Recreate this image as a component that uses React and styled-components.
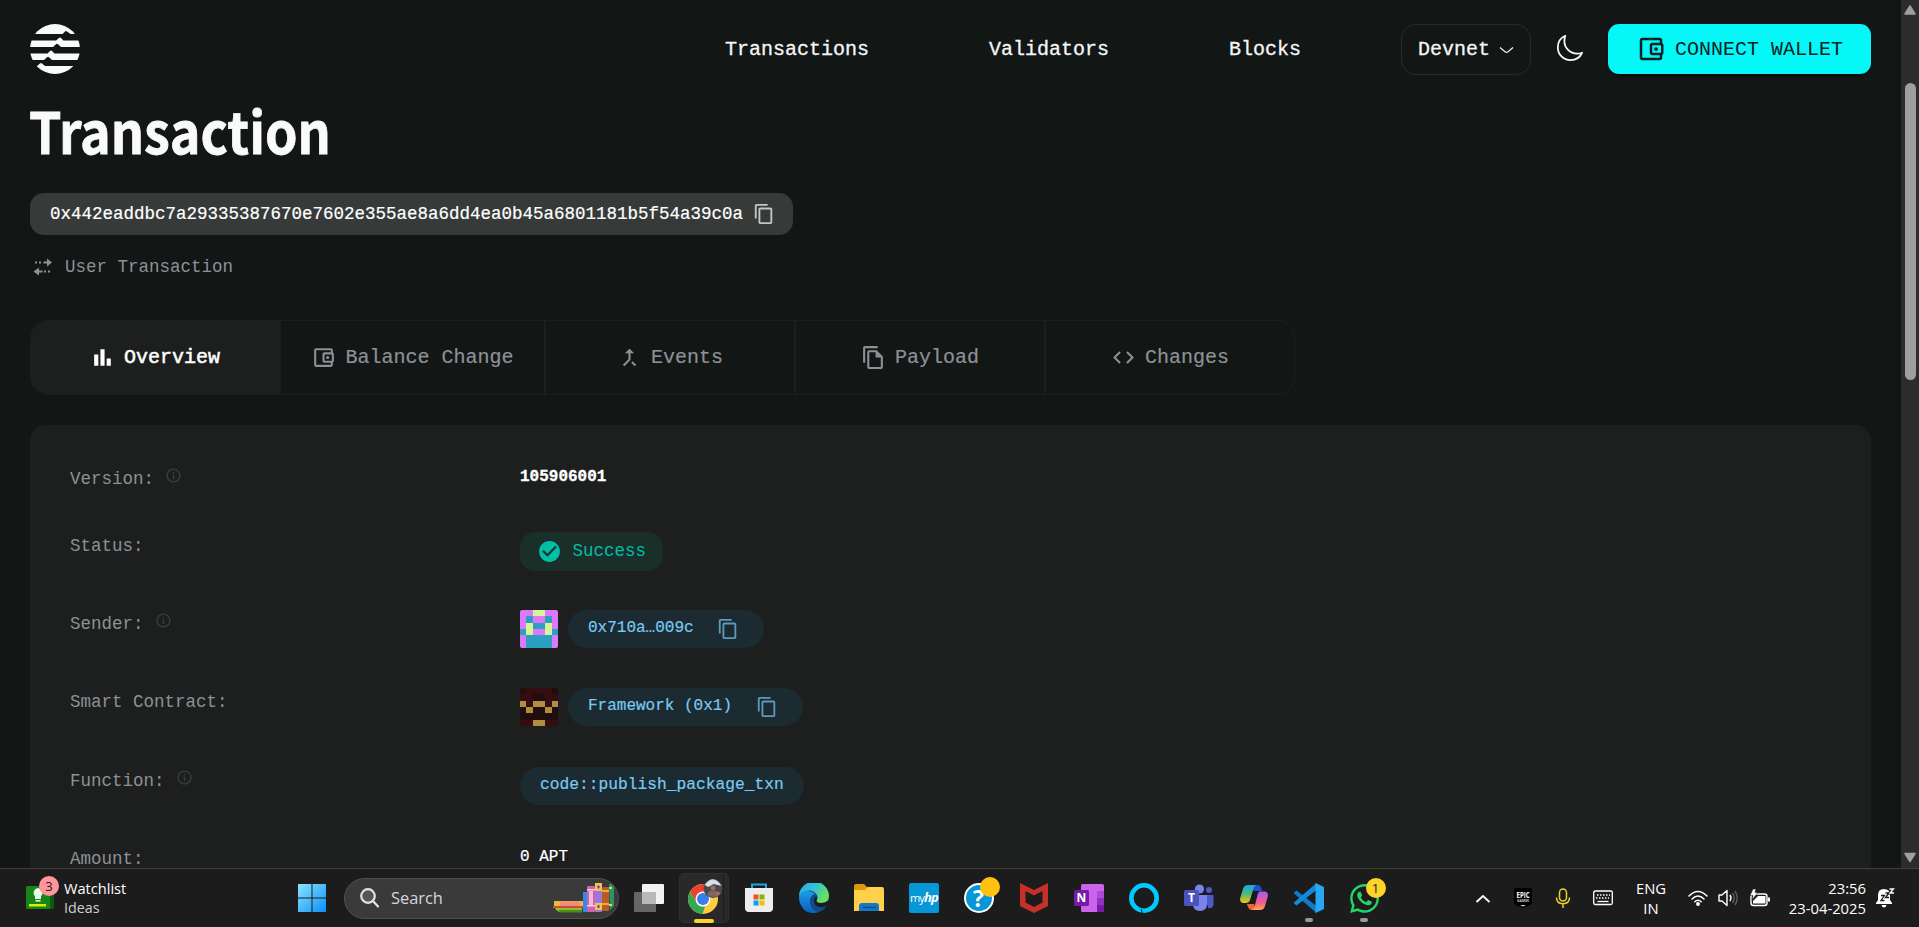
import React from "react";
import styled, { createGlobalStyle } from "styled-components";
import { MdContentCopy, MdCallMerge, MdOutlineFileCopy, MdCode, MdCheckCircle, MdInfoOutline } from "react-icons/md";
import { FaWhatsapp } from "react-icons/fa";

const mono = '"Liberation Mono", monospace';
const ui = '"Open Sans", sans-serif';

const Global = createGlobalStyle`
  * { box-sizing: border-box; }
  html, body { margin: 0; height: 927px; overflow: hidden; background: #121615; }
  svg { display: block; flex: none; }
`;

const Screen = styled.div`
  width: 1919px;
  height: 927px;
  display: flex;
  flex-direction: column;
  overflow: hidden;
  font-family: ${mono};
`;

const Browser = styled.div`
  height: 868px;
  display: flex;
  overflow: hidden;
`;

const Page = styled.main`
  width: 1901px;
  height: 868px;
  padding: 24px 30px 0;
  display: flex;
  flex-direction: column;
  overflow: hidden;
  background: #121615;
`;

const Header = styled.header`
  height: 51px;
  display: flex;
  flex: none;
  align-items: flex-start;
`;

const Nav = styled.nav`
  display: flex;
  gap: 120px;
  margin-left: 645px;
  width: 676px;
`;

const NavLink = styled.a`
  font-size: 20px;
  line-height: 52px;
  color: #f5f5f5;
  -webkit-text-stroke: 0.3px #f5f5f5;
`;

const NetworkSelect = styled.button`
  width: 130px;
  height: 51px;
  padding: 0 16px;
  display: flex;
  align-items: center;
  justify-content: space-between;
  background: none;
  border: 1px solid #272b2a;
  border-radius: 15px;
  font: 20px ${mono};
  color: #f5f5f5;
  -webkit-text-stroke: 0.3px #f5f5f5;
`;

const ThemeToggle = styled.button`
  width: 77px;
  height: 48px;
  padding: 0;
  display: flex;
  align-items: center;
  justify-content: center;
  border: 0;
  background: none;
`;

const WalletButton = styled.button`
  width: 263px;
  height: 50px;
  padding: 0 0 0 28px;
  display: flex;
  align-items: center;
  gap: 9px;
  border: 0;
  border-radius: 11px;
  background: #06f7f7;
  box-shadow: 0 2px 3px rgba(0, 0, 0, 0.5);
  font: 20px ${mono};
  color: #0d2222;
`;

const Title = styled.h1`
  margin: 13px 0 0 -1px;
  height: 82px;
  font-family: "Noto Sans CJK SC", sans-serif;
  font-weight: 700;
  font-size: 57px;
  line-height: 82px;
  color: #fafafa;
  -webkit-text-stroke: 0.8px #fafafa;
  transform: scaleX(0.912);
  transform-origin: left;
`;

const HashChip = styled.div`
  margin-top: 23px;
  width: 763px;
  height: 42px;
  padding-left: 20px;
  display: flex;
  flex: none;
  align-items: center;
  gap: 10px;
  border-radius: 14px;
  background: #363a39;
  color: #fff;
  font-size: 17.5px;
  -webkit-text-stroke: 0.2px #fff;
`;

const TypeLine = styled.div`
  margin-top: 20px;
  height: 24px;
  display: flex;
  flex: none;
  align-items: center;
  gap: 12px;
  padding-left: 3px;
  font-size: 17.5px;
  color: #8f9097;
`;

const Tabs = styled.div`
  margin-top: 41px;
  width: 1265px;
  height: 75px;
  display: flex;
  flex: none;
  overflow: hidden;
  border: 1px solid #1c1f1e;
  border-radius: 18px;
`;

const Tab = styled.button`
  width: ${(p) => p.$width}px;
  padding: 0;
  display: flex;
  align-items: center;
  justify-content: center;
  gap: 9px;
  border: 0;
  border-right: ${(p) => (p.$last ? 0 : 2)}px solid #1c1f1e;
  background: ${(p) => (p.$active ? "#1c1f1e" : "transparent")};
  color: ${(p) => (p.$active ? "#fff" : "#8f9097")};
  font: 20px ${mono};
  -webkit-text-stroke: ${(p) => (p.$active ? 0.5 : 0.2)}px currentColor;

  svg { -webkit-text-stroke: 0; }
`;

const Card = styled.section`
  margin-top: 30px;
  height: 520px;
  flex: none;
  padding: 40px;
  display: flex;
  flex-direction: column;
  gap: 40px;
  border-radius: 15px;
  background: #1c1f1e;
`;

const Row = styled.div`
  height: ${(p) => p.$height || 38.4}px;
  flex: none;
  display: flex;
  align-items: flex-start;
`;

const Label = styled.div`
  width: 450px;
  height: 27px;
  display: flex;
  align-items: flex-start;
  gap: 11px;
  font-size: 17.5px;
  line-height: 28px;
  color: #8f9097;

  svg { margin-top: 2px; color: #3a3e3d; }
`;

const Value = styled.div`
  display: flex;
  align-items: center;
  gap: 10px;
`;

const PlainValue = styled.span`
  font-size: 16px;
  line-height: 25px;
  font-weight: ${(p) => (p.$bold ? 700 : 400)};
  color: #fff;
  -webkit-text-stroke: ${(p) => (p.$bold ? 0.3 : 0.2)}px #fff;
`;

const StatusChip = styled.div`
  width: 143px;
  height: 39px;
  padding-left: 17px;
  display: flex;
  align-items: center;
  gap: 10.5px;
  border-radius: 15px;
  background: #1a2e2a;
  color: #00bfa5;
  font-size: 17.5px;
  line-height: 36px;
`;

const LinkChip = styled.div`
  width: ${(p) => p.$width}px;
  height: 38px;
  padding: 0 25px 0 20px;
  display: flex;
  align-items: center;
  justify-content: space-between;
  border-radius: 20px;
  background: #1c2b31;
  color: #79c9f2;
  font-size: ${(p) => p.$size || 16}px;

  svg { color: #5c9ab9; }
`;

const ChipText = styled.span`
  height: 24px;
  line-height: 22px;
  white-space: nowrap;
  -webkit-text-stroke: 0.2px #79c9f2;
`;

const Scrollbar = styled.div`
  width: 18px;
  display: flex;
  flex-direction: column;
  align-items: center;
  background: #2c2c2c;
`;

const Thumb = styled.div`
  width: 11px;
  height: 297px;
  margin-top: 68px;
  margin-bottom: auto;
  border-radius: 6px;
  background: #9f9f9f;
`;

const Taskbar = styled.footer`
  height: 59px;
  display: flex;
  align-items: center;
  border-top: 1px solid #414141;
  background: #1c1c1c;
  font-family: ${ui};
  color: #fff;
`;

const Widgets = styled.div`
  width: 297px;
  padding-left: 26px;
  display: flex;
  align-items: center;
  gap: 10px;
`;

const BadgeAnchor = styled.div`
  position: relative;
  display: flex;
`;

const Badge = styled.span`
  position: absolute;
  left: ${(p) => p.$x}px;
  top: ${(p) => p.$y}px;
  width: 20px;
  height: 20px;
  border-radius: 50%;
  background: ${(p) => p.$color};
  color: #1c1c1c;
  font-size: 13px;
  line-height: 20px;
  text-align: center;
`;

const WidgetText = styled.div`
  display: flex;
  flex-direction: column;
  font-size: 14.6px;
  line-height: 20px;

  span { color: #cfcfcf; font-size: 14.3px; }
`;

const SearchBox = styled.div`
  width: 275px;
  height: 41px;
  margin-left: 17px;
  padding: 0 3px 0 15px;
  display: flex;
  align-items: center;
  border: 1px solid #505050;
  border-radius: 21px;
  background: #3a3a3a;
  color: #d6d6d6;
  font-size: 16.4px;
  overflow: hidden;

  span { margin: 0 auto 2px 12px; }
`;

const Apps = styled.div`
  display: flex;
  margin-left: 2.5px;
`;

const AppButton = styled.div`
  width: 55px;
  height: 50px;
  display: flex;
  flex-direction: column;
  align-items: center;
  justify-content: center;
  position: relative;
`;

const ActiveTile = styled.div`
  width: 50px;
  height: 50px;
  display: flex;
  align-items: center;
  justify-content: center;
  border: 1px solid #303030;
  border-radius: 5px;
  background: linear-gradient(90deg, #292929 43px, #1c1c1c 43px, #1c1c1c 44px, #292929 44px);
`;

const Indicator = styled.i`
  position: absolute;
  bottom: ${(p) => (p.$wide ? 0 : 1)}px;
  width: ${(p) => (p.$wide ? 20 : 8)}px;
  height: 4px;
  border-radius: 2px;
  background: ${(p) => (p.$wide ? "#ffd42a" : "#9a9a9a")};
`;

const Tray = styled.div`
  display: flex;
  align-items: center;
  margin-left: auto;
  padding-right: 14px;
`;

const TrayIcon = styled.div`
  width: ${(p) => p.$width || 40}px;
  display: flex;
  justify-content: center;
`;

const TrayText = styled.div`
  width: ${(p) => p.$width}px;
  font-size: 14.8px;
  line-height: 20px;
  text-align: ${(p) => p.$align};
  white-space: pre-line;
`;

const AptosLogo = () => (
  <svg width="50" height="50" viewBox="0 0 50 50">
    <defs><clipPath id="disc"><circle cx="25" cy="25" r="25" /></clipPath></defs>
    <g clipPath="url(#disc)" fill="#fafafa">
      <path d="M0 0H50V10H40.5L37 7.5Q36 6.5 35 7.5L32.5 10H0Z" />
      <path d="M0 16.5H26L29 14Q30 13 31 14L33.5 16.5H50V23H31L28 20.2Q27 19.3 26 20.2L23 23H0Z" />
      <path d="M0 29.4H17.5L20 27Q21 26 22 27L24.5 29.4H50V36H22L19 33.2Q18 32.3 17 33.2L14 36H0Z" />
      <path d="M0 42H7L10 39.4Q11 38.5 12 39.4L15 42H50V50H0Z" />
    </g>
  </svg>
);

const WalletIcon = ({ size }) => (
  <svg width={size} height={size} viewBox="0 0 24 24" fill="currentColor">
    <path d="M21 7.28V5c0-1.100-.9-2-2-2H5c-1.110 0-2 .9-2 2v14c0 1.100.89 2 2 2h14c1.100 0 2-.9 2-2v-2.280c.59-.35 1-.98 1-1.720V9c0-.74-.41-1.370-1-1.720zM20 9v6h-7V9h7zM5 19V5h14v2h-6c-1.100 0-2 .9-2 2v6c0 1.100.9 2 2 2h6v2H5z" />
    <circle cx="16" cy="12" r="1.5" />
  </svg>
);

const BarsIcon = () => (
  <svg width="25" height="25" viewBox="0 0 24 24" fill="currentColor">
    <path d="M4 9h4v11H4zM16 13h4v7h-4zM10 4h4v16h-4z" />
  </svg>
);

const TransferIcon = () => (
  <svg width="20" height="18" viewBox="0 0 20 18" fill="#8f9097">
    <path d="M14 0.500 19 4.500 14 8.500V5.500H10.500V3.500H14ZM6 9.500V12.500H9.500V14.500H6V17.500L0.500 13.500Z" />
    <path d="M2 3.500h2v2h-2zM6 3.500h2v2h-2zM11 12.500h2v2h-2zM15 12.500h2v2h-2z" />
  </svg>
);

const MoonIcon = () => (
  <svg width="30" height="30" viewBox="0 0 512 512" fill="none" stroke="#fafafa" strokeWidth="30" strokeLinejoin="round">
    <path d="M160 136c0-30.620 4.510-61.610 16-88C99.570 81.270 48 159.320 48 248c0 119.290 96.710 216 216 216 88.680 0 166.730-51.570 200-128-26.390 11.490-57.380 16-88 16-119.290 0-216-96.710-216-216z" />
  </svg>
);

const PALETTE = { P: "#dd77fc", B: "#2b9fbf", Y: "#d6f596", D: "#200d0d", R: "#350c0f", G: "#b18d42" };

const Identicon = ({ rows }) => (
  <svg width="38" height="38" viewBox="0 0 6 6" shapeRendering="crispEdges">
    {rows.map((row, y) => row.split("").map((c, x) => (
      <rect key={`${x}-${y}`} x={x} y={y} width="1" height="1" fill={PALETTE[c]} />
    )))}
  </svg>
);

const AvatarFrame = styled.div`
  width: 38px;
  height: 38px;
  border-radius: 2px;
  overflow: hidden;
`;

const WidgetIcon = () => (
  <svg width="28" height="24" viewBox="0 0 28 24">
    <rect x="4" width="24" height="23" rx="1.500" fill="#0b5a10" />
    <rect width="24" height="23" rx="1.500" fill="#178517" />
    <path d="M12 3a5 5 0 0 1 3 8.500V14H9v-2.500A5 5 0 0 1 12 3ZM9.500 15h5v1.500h-5Z" fill="#e8ffe8" transform="translate(0 -1)" />
    <rect x="3" y="18" width="17" height="2.500" fill="#d8f000" />
  </svg>
);

const StartIcon = () => (
  <svg width="30" height="30" viewBox="0 0 30 30">
    <defs>
      <linearGradient id="win" x1="0" y1="0" x2="1" y2="1"><stop stopColor="#8be4ff" /><stop offset="1" stopColor="#0a8ff5" /></linearGradient>
    </defs>
    <path d="M1 1h13.500v13.500H1zM15.500 1H29v13.500H15.500zM1 15.500h13.500V29H1zM15.500 15.500H29V29H15.500z" fill="url(#win)" />
  </svg>
);

const SearchIcon = () => (
  <svg width="19" height="20" viewBox="0 0 19 20" fill="none" stroke="#e3e3e3" strokeWidth="2.200" strokeLinecap="round">
    <circle cx="8" cy="8" r="6.800" fill="#565656" /><path d="m13 13 5 5.500" />
  </svg>
);

const BooksIcon = () => (
  <svg width="62" height="31" viewBox="0 0 62 31">
    <path d="M1 18h30v5H1z" fill="#f0b840" /><rect x="7" y="18.500" width="20" height="5" rx="2" fill="#f38a7c" />
    <path d="M0 23h30v2H0z" fill="#c9502f" />
    <path d="M2 25h27v4H7q-4-1-5-4z" fill="#8bc02c" /><path d="M5 27h24v2.500H8z" fill="#4c8d19" />
    <rect x="30" y="9" width="4" height="20" fill="#3489ec" />
    <rect x="34" y="3" width="8" height="26" rx="1" fill="#d35fae" />
    <path d="M36 8h4v14h-4z" fill="#f0b9d8" /><path d="M34 6h8v1.500h-8zM34 22h8v1.500h-8z" fill="#f5d0e0" />
    <rect x="42" y="0" width="7" height="29" rx="1" fill="#9b78dc" /><path d="M42 0h7v8h-7zM42 20h7v7h-7z" fill="#edc54e" />
    <path d="m45.500 2 1.500 2-1.500 2-1.500-2zM45.500 21.500l1.500 2-1.500 2-1.500-2z" fill="#6541b2" />
    <rect x="49" y="4" width="7" height="24" rx="1" fill="#b85c25" /><path d="M49 7h7v2h-7zM49 20h7v2h-7z" fill="#efaa39" />
    <path d="M56 1h5v22l-4 4z" fill="#2f9362" /><path d="M56 4h3v2h-3zM56 21h3v2h-3z" fill="#c5df79" />
  </svg>
);

const TaskViewIcon = () => (
  <svg width="30" height="28" viewBox="0 0 30 28">
    <rect x="8" width="22" height="20" rx="1" fill="#f2f2f2" />
    <rect y="8" width="22" height="20" rx="1" fill="#666" />
    <path d="M8 8h14v12H8z" fill="#b9b9b9" />
  </svg>
);

const ChromeIcon = () => (
  <svg width="38" height="38" viewBox="0 0 38 38">
    <circle cx="18" cy="20" r="15" fill="#ffcd40" />
    <path d="M18 20 5 12.500A15 15 0 0 1 31 12.500H18Z" fill="#ea4335" />
    <path d="M5 12.500 11.500 23.800 18 20V12.500Z" fill="#ea4335" />
    <path d="M5 12.500 11.500 23.800A7.500 7.500 0 0 0 20 27.500L17.500 35A15 15 0 0 1 5 12.500Z" fill="#34a853" />
    <circle cx="18" cy="20" r="7.500" fill="#fff" /><circle cx="18" cy="20" r="6" fill="#3b7de8" />
    <circle cx="28" cy="9.500" r="9.500" fill="#4b4748" />
    <path d="M19.500 6q9-12 17 1l-8-2-5 3z" fill="#d7dfe8" />
    <circle cx="28" cy="9" r="2.500" fill="#9a7059" />
    <path d="M22 16q2-6 7-4 5 0 7 2-6 7-14 2z" fill="#7d6669" />
    <path d="m31 13 4 1-3 3z" fill="#c0655b" />
  </svg>
);

const StoreIcon = () => (
  <svg width="30" height="30" viewBox="0 0 30 30">
    <path d="M8 5V1.500h14V5" fill="none" stroke="#19a7e8" strokeWidth="2" />
    <path d="M1 5h28v20q0 4-4 4H5q-4 0-4-4z" fill="#ededed" />
    <path d="M9.500 11.500h5v5h-5z" fill="#f25022" /><path d="M15.500 11.500h5v5h-5z" fill="#7fba00" />
    <path d="M9.500 17.500h5v5h-5z" fill="#00a4ef" /><path d="M15.500 17.500h5v5h-5z" fill="#ffb900" />
  </svg>
);

const EdgeIcon = () => (
  <svg width="30" height="30" viewBox="0 0 30 30">
    <defs>
      <linearGradient id="edgeTop" x1="0" y1="0" x2="1" y2=".5"><stop stopColor="#2aa6e8" /><stop offset=".5" stopColor="#2fc2dc" /><stop offset="1" stopColor="#6be05a" /></linearGradient>
      <linearGradient id="edgeLow" x1="0" y1="0" x2="0" y2="1"><stop stopColor="#1b9de2" /><stop offset="1" stopColor="#0d5fc2" /></linearGradient>
    </defs>
    <circle cx="15" cy="15" r="15" fill="#114a8b" />
    <path d="M0 14A15 15 0 0 1 30 13q0 7-8 7-5 0-4.500-2.500Q19.500 15 18 12 14 6 7 8 1 10 0 14Z" fill="url(#edgeTop)" />
    <path d="M0 14Q1 8 8 8q5 0 8 3-6 2-5 9 1 7 8 9.300Q8 32 3 24 0 19 0 14Z" fill="url(#edgeLow)" />
    <path d="M17.500 17.500Q17 20 22 20q4 0 6.500-1.500L30 18l-2 5q-4 1.500-7 1-6-1-6-6 0-3 2-4.500 2 1.500.5 4Z" fill="#1c1c1c" />
  </svg>
);

const FolderIcon = () => (
  <svg width="30" height="28" viewBox="0 0 30 28">
    <path d="M0 2q0-2 2-2h8l3 3h14v8H0z" fill="#dd9a08" />
    <path d="M0 6h11l3-3h14q2 0 2 2v22H0z" fill="#ffd04a" />
    <path d="M5 27v-5q0-3 3-3h14q3 0 3 3v5z" fill="#1478c8" /><path d="M9 23.500h13" stroke="#094c88" strokeWidth="1.500" />
  </svg>
);

const HpTile = styled.div`
  width: 30px;
  height: 30px;
  border-radius: 2px;
  background: #0796d6;
  font: 11px/29px ${ui};
  letter-spacing: -0.8px;
  text-align: center;

  b { font-style: italic; font-size: 13px; }
`;

const HelpDisc = styled.div`
  width: 30px;
  height: 30px;
  margin-right: 1px;
  border: 2px solid #fff;
  border-radius: 50%;
  background: #0796d6;
  font: 700 23px/26px ${ui};
  text-align: center;
`;

const McAfeeIcon = () => (
  <svg width="28" height="30" viewBox="0 0 28 30">
    <path d="M0 0 14 7 28 0V23L14 30 0 23ZM5.500 8V19.500L14 24 22.500 19.500V8L14 12.500Z" fill="#c6302b" fillRule="evenodd" />
  </svg>
);

const OneNoteIcon = () => (
  <svg width="30" height="28" viewBox="0 0 30 28">
    <rect x="7" width="23" height="28" rx="1.500" fill="#ca64ea" />
    <path d="M23 7h7v7h-7z" fill="#ae4bd5" /><path d="M23 14h7v7h-7z" fill="#9332bf" /><path d="M23 21h7v7h-7z" fill="#7719aa" />
    <rect y="6" width="15" height="16" rx="1.500" fill="#7719aa" />
    <text x="7.500" y="18.200" fill="#fff" fontFamily="Open Sans" fontWeight="700" fontSize="12" textAnchor="middle">N</text>
  </svg>
);

const AlexaIcon = () => (
  <svg width="30" height="30" viewBox="0 0 30 30">
    <circle cx="15" cy="15" r="12.700" fill="none" stroke="#00caff" strokeWidth="4.600" />
    <path d="m12 26 1.500 4" stroke="#1c1c1c" strokeWidth="1" />
  </svg>
);

const TeamsIcon = () => (
  <svg width="30" height="28" viewBox="0 0 30 28">
    <circle cx="25" cy="6" r="3" fill="#5059c9" /><circle cx="15.500" cy="5" r="4.600" fill="#7b83eb" />
    <path d="M20 11h9.500v9q0 4-5 4.500z" fill="#5059c9" />
    <path d="M9 11h14v9q0 7-7 7t-7-7z" fill="#7b83eb" />
    <rect y="6" width="15" height="16" rx="1.500" fill="#4b53bc" />
    <text x="7.500" y="18.200" fill="#fff" fontFamily="Open Sans" fontWeight="700" fontSize="12" textAnchor="middle">T</text>
  </svg>
);

const CopilotIcon = () => (
  <svg width="28" height="26" viewBox="0 0 28 26">
    <defs>
      <linearGradient id="cpA" x1="0" y1="0" x2="0" y2="1"><stop stopColor="#18a5ef" /><stop offset=".5" stopColor="#4fba78" /><stop offset="1" stopColor="#f7c600" /></linearGradient>
      <linearGradient id="cpB" x1="0" y1="0" x2="0" y2="1"><stop stopColor="#a45cf0" /><stop offset=".6" stopColor="#f65a8c" /><stop offset="1" stopColor="#ffa45c" /></linearGradient>
    </defs>
    <path d="M8 0h10q3 0 4 6h-8z" fill="#1554d5" />
    <path d="M7 19h7l2 6H11q-3-1-4-6z" fill="#ef6531" />
    <path d="M8 0h8q-2 1-3 5l-3 10q-1 3-4 3H3q-4-1-2.500-6L3 4Q4 0 8 0Z" fill="url(#cpA)" />
    <path d="M20 6.500h5q4 1 2.500 6L25 21q-1 4-5 4h-8q2-1 3-5l2.500-10q1-3.500 2.500-3.500Z" fill="url(#cpB)" />
  </svg>
);

const CodeEditorIcon = () => (
  <svg width="30" height="30" viewBox="0 0 30 30">
    <path d="M0 9.500 2.500 7.500 22.500 23v7L0 10.500Z" fill="#0b7dcc" />
    <path d="M0 20.500 2.500 22.500 22.500 7V0L0 19.500Z" fill="#138bd9" />
    <path d="M21.500 0 30 4V26L21.500 30Z" fill="#2aa7f2" />
  </svg>
);

const EpicIcon = () => (
  <svg width="18" height="20" viewBox="0 0 18 20" overflow="visible">
    <path d="M1 0h16q1 0 1 1v15l-9 4-9-4V1q0-1 1-1z" fill="#000" />
    <text x="9" y="9.500" fill="#fff" fontFamily="Open Sans" fontWeight="700" fontSize="8" textLength="13" lengthAdjust="spacingAndGlyphs" textAnchor="middle">EPIC</text>
    <text x="9" y="14.300" fill="#ccc" fontFamily="Open Sans" fontWeight="700" fontSize="4" textLength="12" lengthAdjust="spacingAndGlyphs" textAnchor="middle">GAMES</text>
    <path d="M6 17h6l-3 1.500z" fill="#ddd" />
  </svg>
);

const MicIcon = () => (
  <svg width="16" height="20" viewBox="0 0 16 20" fill="none" stroke="#e9d22f" strokeWidth="1.500">
    <rect x="4.500" y="1" width="7" height="12" rx="3.500" /><path d="M1.500 9.500q0 6 6.500 6.300 6.500-.3 6.500-6.300M8 16v4" />
  </svg>
);

const KeyboardIcon = () => (
  <svg width="20" height="16" viewBox="0 0 20 16" fill="none" stroke="#fff" strokeWidth="1.300">
    <rect x=".7" y="1" width="18.600" height="13.500" rx="1.500" />
    <path d="M4 5h13M3 8h13" strokeDasharray="1.500 1.500" /><path d="M4.500 11.500h11" />
  </svg>
);

const WifiIcon = () => (
  <svg width="20" height="16" viewBox="0 0 20 16" fill="none" stroke="#fff" strokeWidth="1.500" strokeLinecap="round">
    <path d="M1 6q9-9 18 0M4 9q6-6 12 0M6.800 11.800q3.200-3 6.400 0" /><circle cx="10" cy="14" r="1.200" fill="#fff" />
  </svg>
);

const VolumeIcon = () => (
  <svg width="20" height="18" viewBox="0 0 20 18" fill="none" stroke="#fff" strokeWidth="1.400" strokeLinejoin="round">
    <path d="M1 6h3l5-4.500v15L4 12H1z" /><path d="M12 6q2 3 0 6" /><path d="M14.500 4q3.500 5 0 10M17 2q4.500 7 0 14" stroke="#5c5c5c" />
  </svg>
);

const BatteryIcon = () => (
  <svg width="21" height="18" viewBox="0 0 21 18">
    <rect x="2" y="5" width="16" height="11.500" rx="2.500" fill="none" stroke="#fff" strokeWidth="1.400" />
    <path d="M4 14.500V12l5-5h7.500v7.500z" fill="#fff" /><path d="M19 8.500h2v4h-2z" fill="#fff" />
    <path d="M4 0h3L6 3.500h3L3 11l1-4.500H1z" fill="#fff" stroke="#1c1c1c" strokeWidth=".6" />
  </svg>
);

const BellIcon = () => (
  <svg width="19" height="20" viewBox="0 0 19 20">
    <path d="M8 1q6 0 6 6v5l2 3v1H0v-1l2-3V7q0-6 6-6zM5.500 17h5q-.5 2.500-2.500 2.500T5.500 17z" fill="#fff" />
    <path d="M5 7.500h3.500l-3.500 5h3.500" fill="none" stroke="#1c1c1c" strokeWidth="1.300" />
    <path d="M9.500 5h3.500l-3.500 4.500h3.500" fill="none" stroke="#1c1c1c" strokeWidth="1.300" />
    <path d="M13.500 1h4L14 5h4" fill="none" stroke="#1c1c1c" strokeWidth="3" />
    <path d="M13.500 1h4L14 5h4" fill="none" stroke="#fff" strokeWidth="1.300" />
  </svg>
);

const TABS = [
  { name: "Overview", width: 250, icon: <BarsIcon />, active: true },
  { name: "Balance Change", width: 265, icon: <WalletIcon size={25} /> },
  { name: "Events", width: 250, icon: <MdCallMerge size={25} /> },
  { name: "Payload", width: 250, icon: <MdOutlineFileCopy size={25} /> },
  { name: "Changes", width: 248, icon: <MdCode size={25} />, last: true },
];

const Field = ({ label, info, height, children }) => (
  <Row $height={height}>
    <Label>{label}{info && <MdInfoOutline size={17} />}</Label>
    <Value>{children}</Value>
  </Row>
);

export default function App() {
  return (
    <Screen>
      <Global />
      <Browser>
        <Page>
          <Header>
            <AptosLogo />
            <Nav>
              <NavLink>Transactions</NavLink>
              <NavLink>Validators</NavLink>
              <NavLink>Blocks</NavLink>
            </Nav>
            <NetworkSelect>
              Devnet
              <svg width="15" height="8" viewBox="0 0 15 8" fill="none" stroke="#eee" strokeWidth="1.300"><path d="m1 1.500 5 4.300q1.500 1 3 0l5-4.300" /></svg>
            </NetworkSelect>
            <ThemeToggle><MoonIcon /></ThemeToggle>
            <WalletButton><WalletIcon size={30} />CONNECT WALLET</WalletButton>
          </Header>
          <Title>Transaction</Title>
          <HashChip>
            0x442eaddbc7a29335387670e7602e355ae8a6dd4ea0b45a6801181b5f54a39c0a
            <MdContentCopy size={22} color="#c4c6c5" />
          </HashChip>
          <TypeLine><TransferIcon />User Transaction</TypeLine>
          <Tabs>
            {TABS.map((t) => (
              <Tab key={t.name} $width={t.width} $active={t.active} $last={t.last}>{t.icon}{t.name}</Tab>
            ))}
          </Tabs>
          <Card>
            <Field label="Version:" info height={26.6}><PlainValue $bold>105906001</PlainValue></Field>
            <Field label="Status:">
              <StatusChip><MdCheckCircle size={25} />Success</StatusChip>
            </Field>
            <Field label="Sender:" info>
              <AvatarFrame><Identicon rows={["PPYYPP", "PBPPBP", "PYBBYP", "BYPPYB", "PBBBBP", "PBBBBP"]} /></AvatarFrame>
              <LinkChip $width={196}><ChipText>0x710a…009c</ChipText><MdContentCopy size={22} /></LinkChip>
            </Field>
            <Field label="Smart Contract:">
              <AvatarFrame><Identicon rows={["DRRRRD", "RRDDRR", "GRGGRG", "DGDDGD", "DDDDDD", "RRGGRR"]} /></AvatarFrame>
              <LinkChip $width={235}><ChipText>Framework (0x1)</ChipText><MdContentCopy size={22} /></LinkChip>
            </Field>
            <Field label="Function:" info>
              <LinkChip $width={284} $size={16.25}><ChipText>code::publish_package_txn</ChipText></LinkChip>
            </Field>
            <Field label="Amount:"><PlainValue>0 APT</PlainValue></Field>
          </Card>
        </Page>
        <Scrollbar>
          <svg width="18" height="15" viewBox="0 0 18 15"><path d="M9 6 14 14H4Z" fill="#9f9f9f" stroke="#9f9f9f" strokeWidth="1.500" strokeLinejoin="round" /></svg>
          <Thumb />
          <svg width="18" height="16" viewBox="0 0 18 16"><path d="M9 9.500 14 1.500H4Z" fill="#9f9f9f" stroke="#9f9f9f" strokeWidth="1.500" strokeLinejoin="round" /></svg>
        </Scrollbar>
      </Browser>
      <Taskbar>
        <Widgets>
          <BadgeAnchor><WidgetIcon /><Badge $x={13} $y={-10} $color="#ff969b">3</Badge></BadgeAnchor>
          <WidgetText>Watchlist<span>Ideas</span></WidgetText>
        </Widgets>
        <StartIcon />
        <SearchBox><SearchIcon /><span>Search</span><BooksIcon /></SearchBox>
        <Apps>
          <AppButton><TaskViewIcon /></AppButton>
          <AppButton><ActiveTile><ChromeIcon /></ActiveTile><Indicator $wide /></AppButton>
          <AppButton><StoreIcon /></AppButton>
          <AppButton><EdgeIcon /></AppButton>
          <AppButton><FolderIcon /></AppButton>
          <AppButton><HpTile>my<b>hp</b></HpTile></AppButton>
          <AppButton><BadgeAnchor><HelpDisc>?</HelpDisc><Badge $x={16} $y={-6} $color="#ffc20e" /></BadgeAnchor></AppButton>
          <AppButton><McAfeeIcon /></AppButton>
          <AppButton><OneNoteIcon /></AppButton>
          <AppButton><AlexaIcon /></AppButton>
          <AppButton><TeamsIcon /></AppButton>
          <AppButton><CopilotIcon /></AppButton>
          <AppButton><CodeEditorIcon /><Indicator /></AppButton>
          <AppButton><BadgeAnchor><FaWhatsapp size={33} color="#25d366" /><Badge $x={18} $y={-4} $color="#ffd42a">1</Badge></BadgeAnchor><Indicator /></AppButton>
        </Apps>
        <Tray>
          <TrayIcon><svg width="16" height="9" viewBox="0 0 16 9" fill="none" stroke="#fff" strokeWidth="1.800"><path d="m1.500 8 6.500-6 6.500 6" /></svg></TrayIcon>
          <TrayIcon><EpicIcon /></TrayIcon>
          <TrayIcon><MicIcon /></TrayIcon>
          <TrayIcon><KeyboardIcon /></TrayIcon>
          <TrayText $width={56} $align="center">{"ENG\nIN"}</TrayText>
          <TrayIcon $width={38}><WifiIcon /></TrayIcon>
          <TrayIcon $width={22}><VolumeIcon /></TrayIcon>
          <TrayIcon $width={40}><BatteryIcon /></TrayIcon>
          <TrayText $width={87} $align="right">{"23:56\n23-04-2025"}</TrayText>
          <TrayIcon $width={39}><BellIcon /></TrayIcon>
        </Tray>
      </Taskbar>
    </Screen>
  );
}
